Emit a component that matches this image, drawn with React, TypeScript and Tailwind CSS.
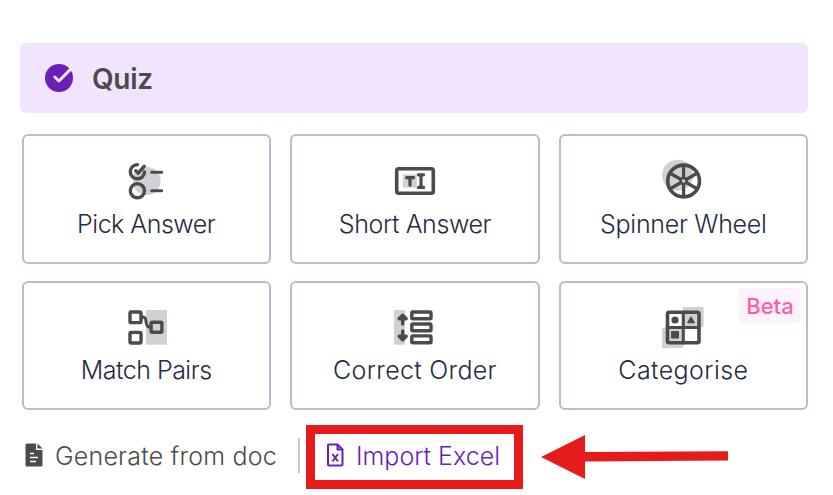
import type { ReactNode } from 'react'
import clsx from 'clsx'

function Icon({ children }: { children: ReactNode }) {
  return (
    <svg
      width="44"
      height="44"
      viewBox="0 0 44 44"
      fill="none"
      stroke="#4b4b4b"
      strokeWidth="3.4"
      strokeLinecap="round"
      strokeLinejoin="round"
    >
      {children}
    </svg>
  )
}

const shade = { fill: '#d1d0d6', stroke: 'none' }
const solid = { fill: '#4b4b4b', stroke: 'none' }

const PickAnswerIcon = () => (
  <Icon>
    <circle cx="21.7" cy="23" r="14" {...shade} />
    <path d="M12.4 6.6a7.1 7.1 0 1 0 7.1 7.4" />
    <path d="m10.7 12.8 2.6 2.4 6-7" />
    <circle cx="12.4" cy="32.7" r="7.1" />
    <path d="M26.7 14.3h10M26.7 32.7h10" strokeWidth="3" />
  </Icon>
)

const ShortAnswerIcon = () => (
  <Icon>
    <path d="M10 16.3h13.7v13.4H10z" {...shade} />
    <rect x="3.7" y="10.7" width="36.6" height="24.6" rx="2" strokeWidth="3.6" />
    <path d="M13.6 19.6h7M17 19.6v7.6" strokeWidth="3.2" />
    <path d="M28 17v12M25.4 16.8h5.2M25.4 29.4h5.2" strokeWidth="3.2" />
  </Icon>
)

const SpinnerWheelIcon = () => (
  <Icon>
    <circle cx="16.6" cy="17.2" r="15.5" {...shade} />
    <circle cx="22.6" cy="23" r="15.9" strokeWidth="3.6" />
    <path d="M22.6 8v30M9.6 15.5l26 15M9.6 30.5l26-15" strokeWidth="3.2" />
    <circle cx="22.6" cy="23" r="4.2" {...solid} />
    <circle cx="22.6" cy="23" r="1.7" {...shade} />
  </Icon>
)

const MatchPairsIcon = () => (
  <Icon>
    <path d="M21 5h21v34.7H21z" {...shade} />
    <rect x="5" y="7" width="11" height="10.6" rx="1.2" />
    <rect x="5" y="27.4" width="11" height="10.6" rx="1.2" />
    <rect x="26.1" y="17.3" width="10.8" height="10" rx="1.2" />
    <path d="M17.2 12c4.4 0 3.4 2.6 3.9 5.5s1.2 5 4.4 5" strokeWidth="3" />
  </Icon>
)

const CorrectOrderIcon = () => (
  <Icon>
    <path d="M1 5h11v34.7H1z" {...shade} />
    <path d="M9.7 19V11M6.2 13.8l3.5-3.6 3.5 3.6z" fill="#4b4b4b" />
    <path d="M9.7 26v8M6.2 31.2l3.5 3.6 3.5-3.6z" fill="#4b4b4b" />
    <rect x="18.8" y="7" width="19.2" height="6.8" rx="1" />
    <rect x="18.8" y="19" width="19.2" height="6.8" rx="1" />
    <rect x="18.8" y="30.9" width="19.2" height="6.8" rx="1" />
  </Icon>
)

const CategoriseIcon = () => (
  <Icon>
    <path d="M22 2h20.6v20.3H22zM1 23h21v20H1z" {...shade} />
    <rect x="6.5" y="7.2" width="31.5" height="30.6" rx="1.8" strokeWidth="3.6" />
    <path d="M22.3 7v31M6.3 22.5h31" strokeWidth="3" />
    <circle cx="14" cy="15" r="3.6" {...solid} />
    <path d="m30 12.4-3 5h6z" fill="#4b4b4b" strokeWidth="1.5" />
    <rect x="10" y="26" width="8" height="7.5" rx=".8" {...solid} />
  </Icon>
)

const slides = [
  { label: 'Pick Answer', icon: <PickAnswerIcon />, spacing: 'mt-1.5 mr-px tracking-[-0.5px]' },
  { label: 'Short Answer', icon: <ShortAnswerIcon />, spacing: 'mt-1.5 tracking-[-0.4px]' },
  { label: 'Spinner Wheel', icon: <SpinnerWheelIcon />, spacing: 'mt-1.5 tracking-[-0.3px]' },
  { label: 'Match Pairs', icon: <MatchPairsIcon />, spacing: 'mt-[5px] mr-px tracking-[-0.5px]' },
  { label: 'Correct Order', icon: <CorrectOrderIcon />, spacing: 'mt-[5px] tracking-[0.3px]' },
  { label: 'Categorise', icon: <CategoriseIcon />, spacing: 'mt-[5px] tracking-[0.4px]', beta: true },
]

export default function App() {
  return (
    <div className="h-[495px] w-[833px] overflow-hidden bg-white pt-[43px] font-['Inter',sans-serif]">
      <header className="ml-5 flex h-[70px] w-[788px] items-center rounded-md bg-[#f0e4fe] pl-[25px]">
        <svg width="28" height="28" viewBox="0 0 28 28" fill="none">
          <circle cx="14" cy="14" r="14" fill="#6a1fba" />
          <path
            d="m9.8 13 4.2 4L25.4 5.4"
            stroke="#f0e4fe"
            strokeWidth="3"
            strokeLinecap="round"
            strokeLinejoin="round"
          />
        </svg>
        <h2 className="mt-px ml-[19px] text-[28px] leading-8 font-semibold tracking-[-0.3px] text-[#4b4b4b]">Quiz</h2>
      </header>

      <div className="mt-[21px] ml-[22px] grid w-[786px] grid-cols-3 grid-rows-[130px_129px] gap-x-[19px] gap-y-[17px]">
        {slides.map((slide) => (
          <button
            key={slide.label}
            className="relative flex flex-col items-center rounded-md border-2 border-[#b6bcd1] bg-white pt-[22px]"
          >
            {slide.icon}
            <span className={clsx('text-[25px] leading-8 font-[350] whitespace-nowrap text-[#252b40]', slide.spacing)}>
              {slide.label}
            </span>
            {slide.beta && (
              <span className="absolute top-[5px] right-[5px] flex h-[35px] w-[62px] items-center justify-center rounded bg-[#fff2fa] pt-0.5 text-[22px] font-medium text-[#ff5cab]">
                Beta
              </span>
            )}
          </button>
        ))}
      </div>

      <footer className="relative flex h-[85px] items-start pt-[28px] pl-[25px] text-[25px] leading-9 font-[350]">
        <button className="flex h-9 w-[273px] items-center text-[#4b4b4b]">
          <svg width="18" height="24" viewBox="0 0 18 24" className="mb-0.5 shrink-0">
            <path
              d="M2 .5h9V7h6.500v15a1.500 1.500 0 0 1-1.500 1.500H2A1.500 1.500 0 0 1 .5 22V2A1.500 1.500 0 0 1 2 .5z"
              fill="#4b4b4b"
            />
            <path d="m12.500.5 5 5h-5z" fill="#4b4b4b" />
            <path d="M5 10.500h4M5 14.500h8M5 18.500h6" stroke="white" strokeWidth="1.600" />
          </svg>
          <span className="ml-[12px] tracking-[0.2px] whitespace-nowrap">Generate from doc</span>
        </button>
        <div className="h-[35px] w-0.5 shrink-0 bg-[#cbcbcb]" />
        <button className="ml-[27px] flex h-9 items-center text-[#6a1fba]">
          <svg
            width="17"
            height="24"
            viewBox="0 0 17 24"
            fill="none"
            stroke="#6a1fba"
            strokeWidth="2"
            strokeLinejoin="round"
            className="mb-0.5 shrink-0"
          >
            <path d="M2 1.500h8.500l5 5v15a1 1 0 0 1-1 1H2a1 1 0 0 1-1-1v-19a1 1 0 0 1 1-1z" />
            <path d="M10.500 1.500v5h5" />
            <path d="m5.500 11 5.500 7.500M11 11l-5.500 7.500" />
          </svg>
          <span className="ml-[12px] whitespace-nowrap">Import Excel</span>
        </button>
        <div className="absolute top-[15px] left-[306px] h-[64px] w-[217px] border-9 border-[#e61b1b]" />
        <svg width="188" height="46" viewBox="0 0 188 46" className="absolute top-[24px] left-[541px]">
          <path d="M0 23 44 1v17l143-.8v9.300L44 27.500V45z" fill="#e61b1b" />
        </svg>
      </footer>
    </div>
  )
}
